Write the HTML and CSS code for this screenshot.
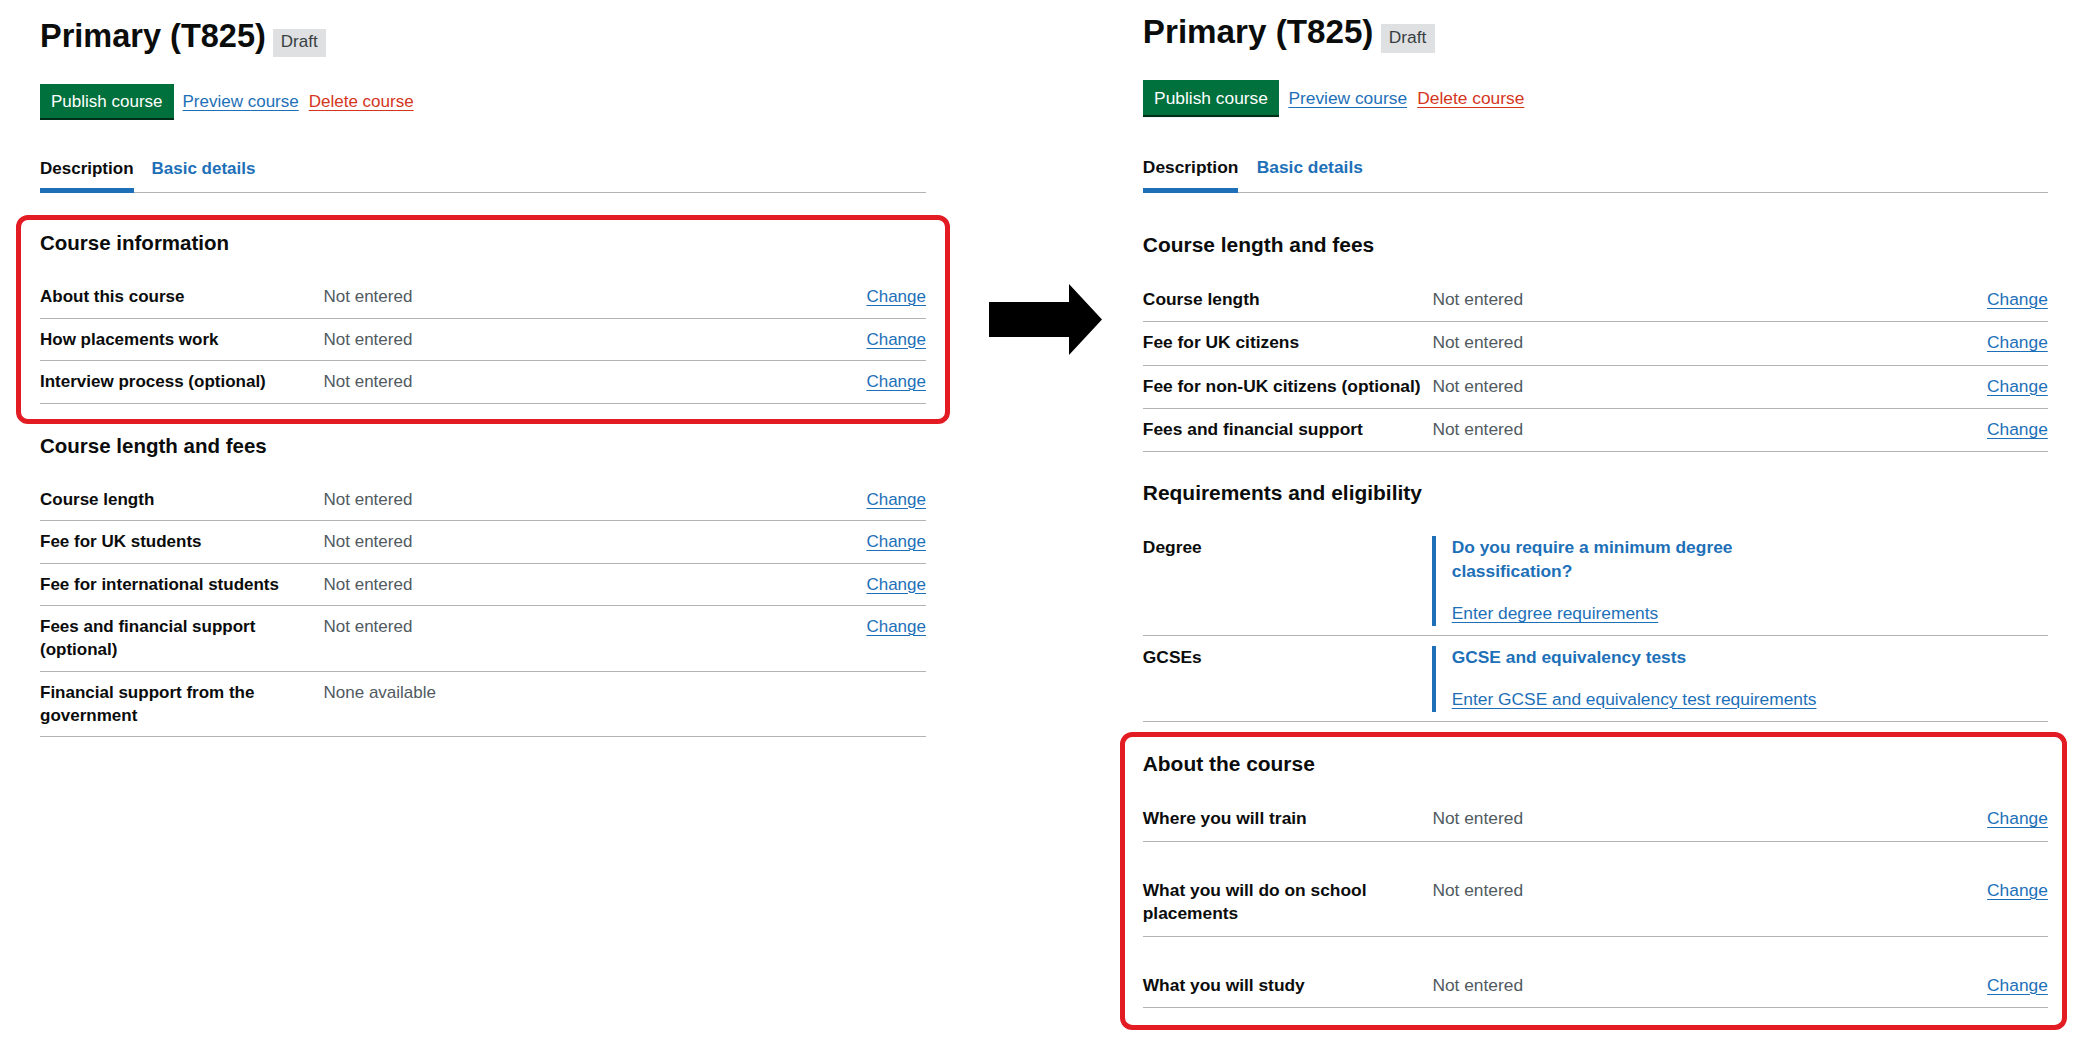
FILE: index.html
```html
<!DOCTYPE html>
<html lang="en">
<head>
<meta charset="utf-8">
<title>Course description comparison</title>
<link rel="stylesheet" href="styles.css">
</head>
<body>
<div class="canvas">

  <div class="panel panel--left">
    <div class="page-header">
      <h1 class="page-title">Primary (T825)</h1>
      <strong class="tag">Draft</strong>
    </div>
    <div class="actions">
      <a class="button" href="#">Publish course</a>
      <a class="link" href="#">Preview course</a>
      <a class="link link--danger" href="#">Delete course</a>
    </div>
    <nav class="tabs">
      <a class="tab tab--active" href="#">Description</a>
      <a class="tab" href="#">Basic details</a>
    </nav>

    <section class="section highlight highlight--left">
      <h2 class="section-title">Course information</h2>
      <dl class="summary">
        <div class="row"><dt class="key">About this course</dt><dd class="value">Not entered</dd><dd class="action"><a class="link" href="#">Change</a></dd></div>
        <div class="row"><dt class="key">How placements work</dt><dd class="value">Not entered</dd><dd class="action"><a class="link" href="#">Change</a></dd></div>
        <div class="row"><dt class="key">Interview process (optional)</dt><dd class="value">Not entered</dd><dd class="action"><a class="link" href="#">Change</a></dd></div>
      </dl>
    </section>

    <section class="section">
      <h2 class="section-title">Course length and fees</h2>
      <dl class="summary">
        <div class="row"><dt class="key">Course length</dt><dd class="value">Not entered</dd><dd class="action"><a class="link" href="#">Change</a></dd></div>
        <div class="row"><dt class="key">Fee for UK students</dt><dd class="value">Not entered</dd><dd class="action"><a class="link" href="#">Change</a></dd></div>
        <div class="row"><dt class="key">Fee for international students</dt><dd class="value">Not entered</dd><dd class="action"><a class="link" href="#">Change</a></dd></div>
        <div class="row"><dt class="key">Fees and financial support (optional)</dt><dd class="value">Not entered</dd><dd class="action"><a class="link" href="#">Change</a></dd></div>
        <div class="row"><dt class="key">Financial support from the government</dt><dd class="value">None available</dd><dd class="action"></dd></div>
      </dl>
    </section>
  </div>

  <div class="arrow" aria-hidden="true">
    <svg width="113" height="71" viewBox="0 0 113 71"><polygon points="0,18 80,18 80,0 113,35.5 80,71 80,53 0,53" fill="#000"/></svg>
  </div>

  <div class="panel panel--right">
    <div class="page-header">
      <h1 class="page-title">Primary (T825)</h1>
      <strong class="tag">Draft</strong>
    </div>
    <div class="actions">
      <a class="button" href="#">Publish course</a>
      <a class="link" href="#">Preview course</a>
      <a class="link link--danger" href="#">Delete course</a>
    </div>
    <nav class="tabs">
      <a class="tab tab--active" href="#">Description</a>
      <a class="tab" href="#">Basic details</a>
    </nav>

    <section class="section section--first">
      <h2 class="section-title">Course length and fees</h2>
      <dl class="summary">
        <div class="row"><dt class="key">Course length</dt><dd class="value">Not entered</dd><dd class="action"><a class="link" href="#">Change</a></dd></div>
        <div class="row"><dt class="key">Fee for UK citizens</dt><dd class="value">Not entered</dd><dd class="action"><a class="link" href="#">Change</a></dd></div>
        <div class="row"><dt class="key">Fee for non-UK citizens (optional)</dt><dd class="value">Not entered</dd><dd class="action"><a class="link" href="#">Change</a></dd></div>
        <div class="row"><dt class="key">Fees and financial support</dt><dd class="value">Not entered</dd><dd class="action"><a class="link" href="#">Change</a></dd></div>
      </dl>
    </section>

    <section class="section section--tight">
      <h2 class="section-title">Requirements and eligibility</h2>
      <dl class="summary">
        <div class="row">
          <dt class="key">Degree</dt>
          <dd class="value value--wide">
            <div class="inset">
              <a class="inset-heading" href="#">Do you require a minimum degree classification?</a>
              <a class="link" href="#">Enter degree requirements</a>
            </div>
          </dd>
        </div>
        <div class="row">
          <dt class="key">GCSEs</dt>
          <dd class="value value--wide">
            <div class="inset">
              <a class="inset-heading" href="#">GCSE and equivalency tests</a>
              <a class="link" href="#">Enter GCSE and equivalency test requirements</a>
            </div>
          </dd>
        </div>
      </dl>
    </section>

    <section class="section highlight highlight--right">
      <h2 class="section-title">About the course</h2>
      <dl class="summary">
        <div class="row"><dt class="key">Where you will train</dt><dd class="value">Not entered</dd><dd class="action"><a class="link" href="#">Change</a></dd></div>
        <div class="row row--spaced"><dt class="key">What you will do on school placements</dt><dd class="value">Not entered</dd><dd class="action"><a class="link" href="#">Change</a></dd></div>
        <div class="row row--spaced"><dt class="key">What you will study</dt><dd class="value">Not entered</dd><dd class="action"><a class="link" href="#">Change</a></dd></div>
      </dl>
    </section>
  </div>

</div>
</body>
</html>
```

FILE: styles.css
```css
* { box-sizing: border-box; }

html, body {
  margin: 0;
  padding: 0;
  background: #ffffff;
}

body {
  font-family: "Liberation Sans", Arial, sans-serif;
  font-size: 17px;
  line-height: 23px;
  color: #0b0c0c;
}

.canvas {
  display: flex;
  align-items: flex-start;
  width: 2083px;
  height: 1047px;
  padding-left: 40px;
  overflow: hidden;
}

.panel {
  flex: none;
  width: 886px;
}
.panel--left { padding-top: 18px; }
/* the right-hand screenshot was captured at a slightly larger scale */
.panel--right {
  zoom: 1.0214;
  margin-left: 40px;
  padding-top: 14px;
}
.panel--right .tabs { margin-top: 40px; }

.arrow {
  flex: none;
  width: 113px;
  height: 71px;
  margin-left: 63px;
  margin-top: 284px;
}
.arrow svg { display: block; }

/* header */
.page-header {
  display: flex;
  align-items: baseline;
  gap: 7px;
}
.page-title {
  margin: 0;
  font-size: 32.5px;
  line-height: 36px;
  font-weight: 700;
}
.tag {
  display: inline-block;
  padding: 4px 8px 6px;
  font-size: 17px;
  line-height: 18px;
  font-weight: 400;
  color: #383f43;
  background: #dee0e2;
}

.actions {
  display: flex;
  align-items: baseline;
  gap: 10px;
  margin-top: 27px;
}
.button {
  display: inline-block;
  padding: 8px 11px 7px;
  font-size: 17px;
  line-height: 19px;
  color: #ffffff;
  background: #00703c;
  box-shadow: 0 2px 0 #002d18;
  text-decoration: none;
  margin-right: -1px;
}

.link {
  color: #1d70b8;
  text-decoration: underline;
  text-decoration-thickness: 1px;
  text-underline-offset: 0.16em;
}
.link--danger { color: #d4351c; }

/* tabs */
.tabs {
  display: flex;
  gap: 18px;
  margin-top: 39px;
  border-bottom: 1px solid #b1b4b6;
}
.tab {
  display: block;
  padding-bottom: 8px;
  margin-bottom: -1px;
  border-bottom: 5px solid transparent;
  font-weight: 700;
  color: #1d70b8;
  text-decoration: none;
}
.tab--active {
  color: #0b0c0c;
  border-bottom-color: #1d70b8;
}

/* sections */
.section { margin-top: 30px; }
.section--first { margin-top: 40px; }
.section--tight { margin-top: 28.7px; }

.section-title {
  margin: -1.5px 0 21px;
  font-size: 20.5px;
  line-height: 25px;
  font-weight: 700;
}

.highlight {
  border: 5px solid #e31b23;
  border-radius: 12px;
}
.highlight--left {
  margin: 21.5px -24px -21px;
  padding: 12px 19px 15px;
}
.highlight--right {
  margin: 9.5px -18.6px 0 -22.5px;
  padding: 15px 13.6px 17px 17.5px;
}
.highlight--right .section-title { margin-bottom: 21.5px; }

/* summary list */
.summary { margin: 0; }
.row {
  display: grid;
  grid-template-columns: 32% 1fr auto;
  padding: 9px 0 9.5px;
  border-bottom: 1px solid #b1b4b6;
}
.row--spaced { padding-top: 36.5px; }

.key {
  margin: 0;
  padding-right: 10px;
  font-weight: 700;
}
.value {
  margin: 0;
  color: #505a5f;
}
.value--wide { grid-column: 2 / 4; }
.action {
  margin: 0;
  text-align: right;
}

.inset {
  display: flex;
  flex-direction: column;
  align-items: flex-start;
  border-left: 4px solid #1d70b8;
  padding-left: 15px;
}
.inset-heading {
  max-width: 300px;
  margin-bottom: 18.5px;
  font-weight: 700;
  color: #1d70b8;
  text-decoration: none;
}
```
